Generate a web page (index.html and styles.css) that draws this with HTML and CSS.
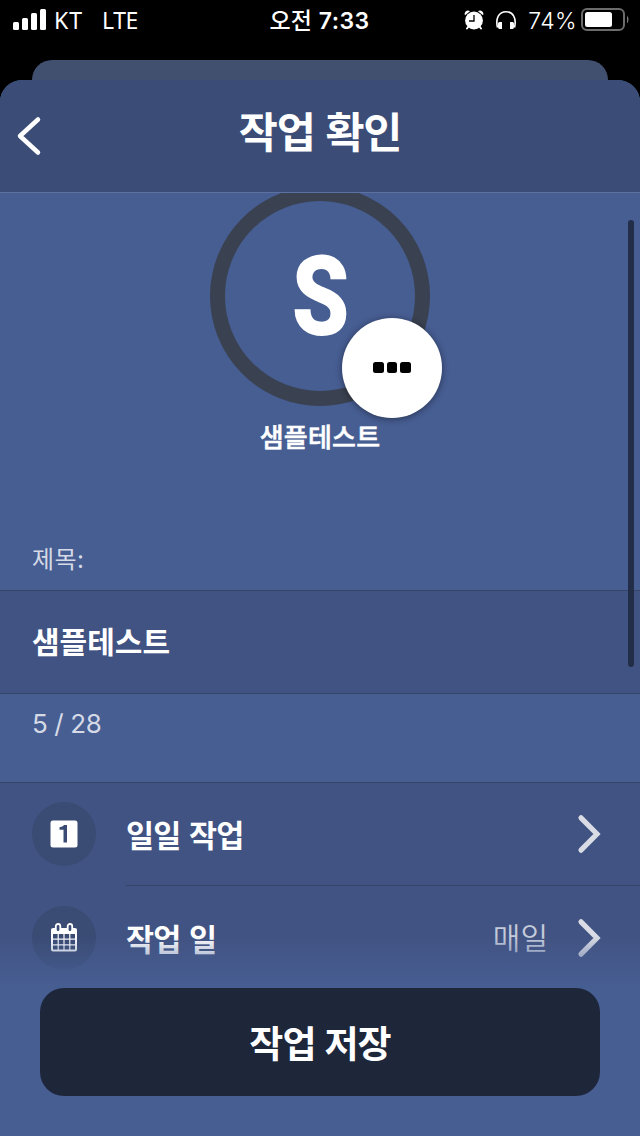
FILE: index.html
```html
<!DOCTYPE html>
<html lang="ko">
<head>
<meta charset="utf-8">
<title>작업 확인</title>
<link rel="stylesheet" href="styles.css">
</head>
<body>
<div class="screen">
  <div class="status">
    <div class="status-left">
      <svg class="signal" width="34" height="22" viewBox="0 0 34 22" fill="#fff"><rect x="0" y="13" width="6" height="8" rx="1.5"/><rect x="9" y="9" width="6" height="12" rx="1.5"/><rect x="18" y="4" width="6" height="17" rx="1.5"/><rect x="27" y="0" width="6" height="21" rx="1.5"/></svg>
      <span class="carrier">KT</span><span class="network">LTE</span>
    </div>
    <div class="clock"><span class="ampm">오전</span><span class="time">7:33</span></div>
    <div class="status-right">
      <svg class="alarm" width="20" height="21" viewBox="0 0 20 21"><path d="M4.500 16.500 3 18.500M15.500 16.500l1.500 2" stroke="#fff" stroke-width="2" stroke-linecap="round"/><path d="M1 5.200A3.300 3.300 0 0 1 6 1.200zM19 5.200A3.300 3.300 0 0 0 14 1.200z" fill="#fff"/><circle cx="10" cy="10.500" r="8.900" fill="#fff"/><path d="M10 5v6H5" fill="none" stroke="#000" stroke-width="1.300"/></svg>
      <svg class="phones" width="20" height="20" viewBox="0 0 20 20"><path d="M1.500 17.500C-.8 8 3 1.700 10 1.700S20.800 8 18.500 17.500" fill="none" stroke="#fff" stroke-width="1.600"/><path d="M2 13.500q0-1.500 1.500-1.500H6v7H3.500Q2 19 2 17zM18 13.500q0-1.500-1.500-1.500H14v7h2.500q1.500 0 1.500-2z" fill="#fff"/></svg>
      <span class="percent">74%</span>
      <svg class="battery" width="48" height="24" viewBox="0 0 48 24"><rect x="1" y="1" width="42" height="21" rx="5" fill="none" stroke="#6c6c6c" stroke-width="2"/><rect x="4" y="4" width="27" height="15" rx="2.500" fill="#fff"/><path d="M46 7.500q3 4 0 8z" fill="#777"/></svg>
    </div>
  </div>
  <div class="back-card"></div>
  <div class="sheet">
    <header class="header">
      <svg class="back" width="26" height="40" viewBox="0 0 26 40"><path d="M22 3.500 4 20l18 16.500" fill="none" stroke="#fff" stroke-width="4.500" stroke-linecap="round" stroke-linejoin="round"/></svg>
      <h1 class="title">작업 확인</h1>
    </header>
    <main class="content">
      <div class="profile">
        <div class="ring"><span class="initial">S</span>
          <div class="more"><i></i><i></i><i></i></div>
        </div>
        <div class="name">샘플테스트</div>
      </div>
      <div class="label">제목:</div>
      <div class="field">샘플테스트</div>
      <div class="count">5 / 28</div>
      <div class="list">
        <div class="row">
          <div class="badge"><svg width="28" height="28" viewBox="0 0 28 28"><path fill="#fff" fill-rule="evenodd" d="M3 .5h22q2.500 0 2.500 2.500v22q0 2.500-2.500 2.500H3Q.5 27.500.5 25V3Q.5.500 3 .5zM14.200 5q-1.500 2-4.700 2.200v2.600h4V22.500H17V5z"/></svg></div>
          <div class="row-body first"><span class="row-title">일일 작업</span>
            <svg class="chev" width="26" height="40" viewBox="0 0 26 40"><path d="M5 3.800 21 20 5 36.200" fill="none" stroke="#d9dce4" stroke-width="5.200" stroke-linecap="round"/></svg></div>
        </div>
        <div class="row">
          <div class="badge"><svg width="28" height="30" viewBox="0 0 28 30"><path d="M3 5h22q2 0 2 2v19.500q0 2-2 2H3q-2 0-2-2V7q0-2 2-2z" fill="#fff"/><path d="M3 11h4.600v4.600H3zM8.800 11h4.600v4.600H8.800zM14.600 11h4.600v4.600h-4.600zM20.400 11H25v4.600h-4.600zM3 16.800h4.600v4.400H3zM8.800 16.800h4.600v4.400H8.800zM14.600 16.800h4.600v4.400h-4.600zM20.400 16.800H25v4.400h-4.600zM3 22.400h4.600v4.200H3zM8.800 22.400h4.600v4.200H8.800zM14.600 22.400h4.600v4.200h-4.600zM20.400 22.400H25v4.200h-4.600z" fill="#3a4b74"/><rect x="5.800" y="1" width="4.500" height="8" rx="2.250" fill="#3a4b74" stroke="#fff" stroke-width="1.800"/><rect x="17.700" y="1" width="4.500" height="8" rx="2.250" fill="#3a4b74" stroke="#fff" stroke-width="1.800"/></svg></div>
          <div class="row-body"><span class="row-title">작업 일</span><span class="value">매일</span>
            <svg class="chev" width="26" height="40" viewBox="0 0 26 40"><path d="M5 3.800 21 20 5 36.200" fill="none" stroke="#d9dce4" stroke-width="5.200" stroke-linecap="round"/></svg></div>
        </div>
      </div>
      <div class="scrollbar"></div>
      <div class="footer"><div class="save">작업 저장</div></div>
    </main>
  </div>
</div>
</body>
</html>
```
FILE: styles.css
```css
* { box-sizing: border-box; }
body { margin: 0; background: #000; }
.screen {
  width: 640px; height: 1136px; overflow: hidden;
  display: flex; flex-direction: column;
  background: #000; color: #fff;
  font-family: Inter, "Noto Sans CJK KR", sans-serif;
  white-space: nowrap;
}
.status {
  height: 60px; padding: 0 11px 20px 13px;
  display: grid; grid-template: 40px / 1fr auto 1fr; align-items: center;
  font-size: 23px; line-height: 38px;
}
.status-left, .status-right, .clock { display: flex; align-items: center; }
.status-left { font-family: "Noto Sans", sans-serif; }
.status-right { justify-content: flex-end; }
.carrier { margin-left: 7px; letter-spacing: 1px; }
.network { margin-left: 19px; letter-spacing: -0.4px; }
.clock { font-weight: 500; gap: 7px; padding: 2px 3px 0 0; }
.time { font-weight: 600; letter-spacing: 0.4px; }
.alarm { margin-right: 1px; }
.phones { margin-left: 11px; }
.percent { margin: 2px 4px 0 12px; font-weight: 300; letter-spacing: 0.4px; }
.back-card { height: 20px; margin: 0 32px; border-radius: 20px 20px 0 0; background: #425070; }
.sheet {
  flex: 1; min-height: 0; display: flex; flex-direction: column;
  border-radius: 22px 22px 0 0; overflow: hidden; background: #475e93;
}
.header {
  height: 113px; padding: 0 16px 8px; flex: none;
  display: grid; grid-template-columns: 26px 1fr 26px; align-items: center;
  background: #3b4d76; border-bottom: 1px solid #5c71a0;
}
.back { margin-top: 8px; }
.title { margin: 0; padding-top: 2px; text-align: center; font-size: 42.500px; line-height: 60px; font-weight: 700; letter-spacing: -1.200px; word-spacing: 2px; }
.content { position: relative; flex: 1; min-height: 0; overflow: hidden; }
.profile { height: 341px; display: flex; flex-direction: column; align-items: center; margin-top: -7px; }
.ring {
  position: relative; width: 220px; height: 220px; flex: none;
  border: 15px solid #3a4150; border-radius: 50%;
  display: flex; align-items: center; justify-content: center;
}
.initial { font: 900 111px/112px Roboto, sans-serif; transform: scaleX(0.83); padding: 1px 0 0 2px; }
.more {
  position: absolute; left: 117px; top: 117px; width: 100px; height: 100px;
  border-radius: 50%; background: #fff; box-shadow: 0 1px 7px rgba(0,0,0,.45);
  display: flex; align-items: center; justify-content: center; gap: 3px;
}
.more i { width: 10.500px; height: 10.500px; margin-bottom: 1px; border-radius: 2.500px; background: #000; }
.name { margin-top: 12px; font-size: 26px; line-height: 40px; font-weight: 500; letter-spacing: 0.2px; -webkit-text-stroke: 0.5px #fff; }
.label { height: 63px; padding: 13px 32px 0; font-size: 24px; line-height: 40px; color: #d5dae6; letter-spacing: 0.4px; }
.field {
  height: 104px; padding: 0 32px; line-height: 103px; font-size: 30px; font-weight: 700;
  background: #415382; border: 1px solid #344565; border-width: 1px 0;
}
.count { height: 88px; padding: 10px 32px 0; font-size: 26px; line-height: 40px; color: #d5dae6; letter-spacing: -0.4px; }
.list { background: #415382; border-top: 1px solid #344565; height: 240px; }
.row { height: 104px; padding-left: 32px; display: flex; align-items: center; margin-top: -1px; }
.row + .row { margin-top: 0; }
.badge { width: 64px; height: 64px; border-radius: 50%; background: #3a4b74; display: flex; align-items: center; justify-content: center; }
.row-body { flex: 1; align-self: stretch; margin-left: 30px; padding-right: 38px; display: flex; align-items: center; }
.first { border-bottom: 1px solid #344565; }
.row-title { flex: 1; font-size: 30.500px; font-weight: 700; line-height: 48px; letter-spacing: -0.8px; word-spacing: 2px; padding-top: 4px; }
.value { font-size: 30px; font-weight: 350; line-height: 48px; color: #c3cada; margin-right: 28px; padding-bottom: 1px; }
.scrollbar { position: absolute; left: 628px; top: 27px; width: 6px; height: 447px; border-radius: 3px; background: #222d47; }
.footer {
  position: absolute; left: 0; right: 0; bottom: 0; height: 200px; padding: 52px 40px 40px;
  background: linear-gradient(rgba(71,94,147,0), #475e93 52px);
}
.save { height: 108px; border-radius: 24px; background: #1e263a; text-align: center; font-size: 37px; font-weight: 700; line-height: 113px; letter-spacing: -0.9px; word-spacing: 1px; }
```
